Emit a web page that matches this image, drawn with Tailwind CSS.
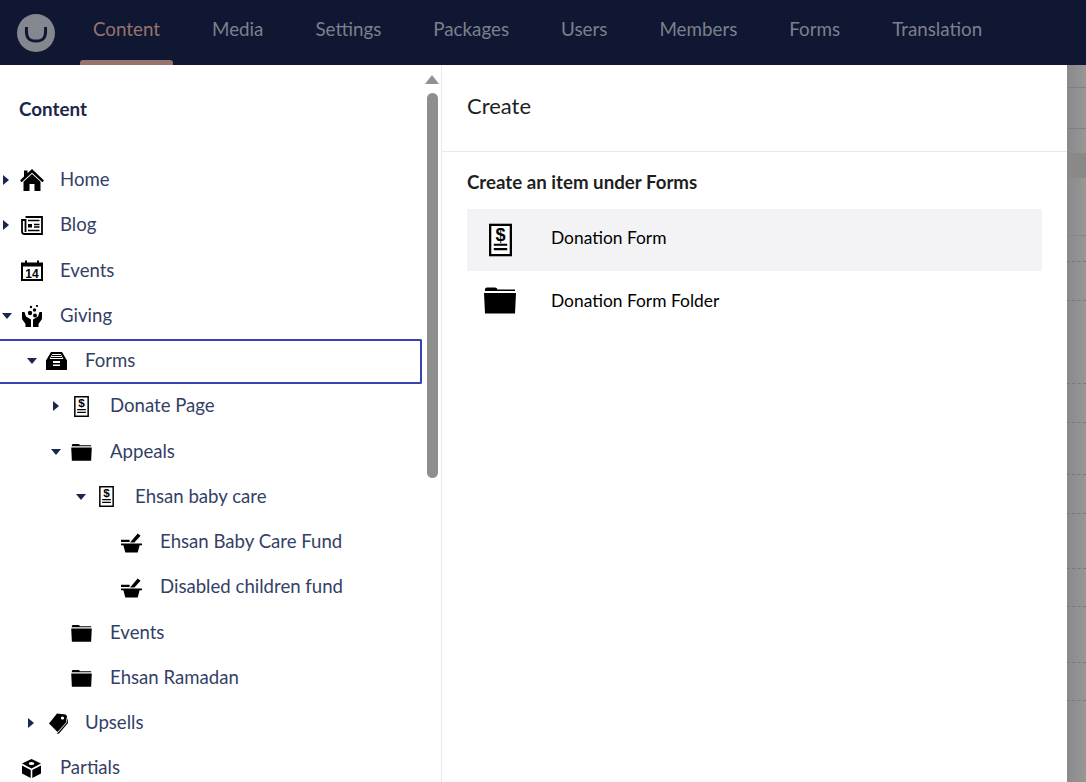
<!DOCTYPE html>
<html lang="en">

<head>
    <meta charset="UTF-8">
    <meta name="viewport" content="width=device-width, initial-scale=1.0">
    <script src="https://cdn.jsdelivr.net/npm/@tailwindcss/browser@4"></script>
    <title>Content - Create</title>
</head>

<body class="w-[1086px] h-[782px] overflow-hidden bg-white font-['Lato','Noto_Sans',sans-serif]">
    <!-- icons used more than once -->
    <svg class="hidden">
        <symbol id="folder" viewBox="0 0 32 28">
            <path d="M1 6V3.2Q1 1.5 3 1.5H11Q13 1.5 13.5 3.5H31V5H1ZM0 7H32L31 27.5H1Z" fill="#000" />
        </symbol>
        <symbol id="donation" viewBox="0 0 24 34">
            <rect x="1.2" y="1.2" width="21.6" height="31.6" fill="#fff" stroke="#000" stroke-width="2.4" />
            <text x="12" y="18" text-anchor="middle" font-size="19" font-weight="900" font-family="Liberation Sans">$</text>
            <path d="M5 22H19M5 26.5H19" stroke="#000" stroke-width="2.2" />
        </symbol>
        <symbol id="mortar" viewBox="0 0 22 22">
            <path d="M0 8H9V10.5H0ZM0 12H22V14H19.5L17.5 21.5H4.5L2.5 14H0Z" fill="#000" />
            <path d="M9.5 11L17.5 1.5L20.5 3.8L14 11Z" fill="#000" />
        </symbol>
        <symbol id="down" viewBox="0 0 10 6">
            <path d="M0 0H10L5 6Z" fill="#1b264f" />
        </symbol>
        <symbol id="right" viewBox="0 0 6 10">
            <path d="M0 0L6 5L0 10Z" fill="#1b264f" />
        </symbol>
    </svg>

    <!-- top bar -->
    <header class="h-[65px] bg-[#0f1733] flex items-center text-[18.8px] text-[#7c808c]">
        <div class="w-[38px] h-[38px] ml-[17px] rounded-full bg-[#85878e] flex items-center justify-center">
            <svg width="24" height="24" viewBox="0 0 24 24" fill="none">
                <path d="M2.5 6C2 15 3 20 12 20C21 20 22 15 21.5 6" stroke="#0f1733" stroke-width="3" />
            </svg>
        </div>
        <nav class="flex ml-[25px] h-full">
            <a class="relative w-[93px] pb-[6px] flex items-center justify-center text-[#98736e]">Content
                <span class="absolute bottom-0 left-0 right-0 h-[5px] rounded-t-[3px] bg-[#98736e]"></span>
            </a>
            <a class="flex items-center pb-[6px] ml-[39px]">Media</a>
            <a class="flex items-center pb-[6px] ml-[52px]">Settings</a>
            <a class="flex items-center pb-[6px] ml-[52px]">Packages</a>
            <a class="flex items-center pb-[6px] ml-[52px]">Users</a>
            <a class="flex items-center pb-[6px] ml-[52px]">Members</a>
            <a class="flex items-center pb-[6px] ml-[52px]">Forms</a>
            <a class="flex items-center pb-[6px] ml-[52px]">Translation</a>
        </nav>
    </header>

    <div class="flex h-[717px]">
        <!-- content tree -->
        <aside class="w-[442px] shrink-0 flex border-r border-[#e9e9eb] overflow-hidden">
            <div class="w-[423px] shrink-0">
                <h2 class="pl-[19px] pt-[33px] text-[18.8px] leading-[22px] font-bold text-[#1b264f]">Content</h2>
                <ul class="mt-[37.5px] text-[18.6px] text-[#343f66]">
                    <li class="h-[45.25px] flex items-center">
                        <svg class="ml-[3px]" width="6" height="10"><use href="#right" /></svg>
                        <svg class="ml-[11px]" width="24" height="22" viewBox="0 0 24 22">
                            <path d="M12 0L24 11.5L22.4 13.2L12 3.8L1.6 13.2L0 11.5L4 7.6V1.5H7.5V4.3ZM12 5L20.5 12.8V22H14.5V15H9.5V22H3.5V12.8Z" fill="#000" />
                        </svg>
                        <span class="ml-[16px]">Home</span>
                    </li>
                    <li class="h-[45.25px] flex items-center">
                        <svg class="ml-[3px]" width="6" height="10"><use href="#right" /></svg>
                        <svg class="ml-[12px]" width="22" height="19" viewBox="0 0 22 19" fill="none" stroke="#000">
                            <path d="M4.5 1H21V18H3.5Q1 18 1 15.5V4H4.5V16" stroke-width="1.8" />
                            <path d="M7 4.5H18.5M13 8.5H18.5M13 11H18.5M7 14.5H18.5" stroke-width="1.5" />
                            <rect x="7" y="8" width="4" height="3.5" fill="#000" stroke="none" />
                        </svg>
                        <span class="ml-[17px]">Blog</span>
                    </li>
                    <li class="h-[45.25px] flex items-center">
                        <svg class="ml-[21px]" width="22" height="21" viewBox="0 0 22 21">
                            <path d="M0 2.5H4V0.5H6V2.5H16V0.5H18V2.5H22V21H0ZM2 6.5V19H20V6.5Z" fill="#000" />
                            <text x="11" y="17.5" text-anchor="middle" font-size="12" font-weight="700" font-family="Liberation Sans">14</text>
                        </svg>
                        <span class="ml-[17px]">Events</span>
                    </li>
                    <li class="h-[45.25px] flex items-center">
                        <svg class="ml-[2px]" width="10" height="6"><use href="#down" /></svg>
                        <svg class="ml-[10px]" width="20" height="22" viewBox="0 0 20 22">
                            <path d="M0 7H2.5L4 11.5L9 14.5V22H3.5V19L0 14ZM20 7H17.5L16 11.5L11 14.5V22H16.5V19L20 14Z" fill="#000" />
                            <circle cx="8" cy="8" r="2.2" fill="#000" />
                            <circle cx="12.5" cy="5" r="1.7" fill="#000" />
                            <circle cx="13" cy="10.5" r="2" fill="#000" />
                            <circle cx="9" cy="2" r="1.2" fill="#000" />
                            <circle cx="15" cy="1" r="1.1" fill="#000" />
                        </svg>
                        <span class="ml-[18px]">Giving</span>
                    </li>
                    <!-- selected node -->
                    <li class="h-[45.25px] w-[422px] flex items-center border-2 border-l-0 border-[#3544b1] rounded-r-[2px]">
                        <svg class="ml-[27px]" width="10" height="6"><use href="#down" /></svg>
                        <svg class="ml-[9px]" width="21" height="18" viewBox="0 0 21 18">
                            <path d="M5 0H16L21 8.5V18H0V8.5ZM6.3 2L3.6 7H17.4L14.7 2ZM7 9V11H14V9ZM7 12.5V14H14V12.5Z" fill="#000" fill-rule="evenodd" />
                            <path d="M6 3.5H15M5 5.5H16" stroke="#000" stroke-width="1" />
                        </svg>
                        <span class="ml-[18px]">Forms</span>
                    </li>
                    <li class="h-[45.25px] flex items-center">
                        <svg class="ml-[53px]" width="6" height="10"><use href="#right" /></svg>
                        <svg class="ml-[15px]" width="15" height="21"><use href="#donation" /></svg>
                        <span class="ml-[21px]">Donate Page</span>
                    </li>
                    <li class="h-[45.25px] flex items-center">
                        <svg class="ml-[51px]" width="10" height="6"><use href="#down" /></svg>
                        <svg class="ml-[10px]" width="21" height="18"><use href="#folder" /></svg>
                        <span class="ml-[18px]">Appeals</span>
                    </li>
                    <li class="h-[45.25px] flex items-center">
                        <svg class="ml-[76px]" width="10" height="6"><use href="#down" /></svg>
                        <svg class="ml-[13px]" width="15" height="21"><use href="#donation" /></svg>
                        <span class="ml-[21px]">Ehsan baby care</span>
                    </li>
                    <li class="h-[45.25px] flex items-center">
                        <svg class="ml-[121px]" width="21" height="21"><use href="#mortar" /></svg>
                        <span class="ml-[18px]">Ehsan Baby Care Fund</span>
                    </li>
                    <li class="h-[45.25px] flex items-center">
                        <svg class="ml-[121px]" width="21" height="21"><use href="#mortar" /></svg>
                        <span class="ml-[18px]">Disabled children fund</span>
                    </li>
                    <li class="h-[45.25px] flex items-center">
                        <svg class="ml-[71px]" width="21" height="18"><use href="#folder" /></svg>
                        <span class="ml-[18px]">Events</span>
                    </li>
                    <li class="h-[45.25px] flex items-center">
                        <svg class="ml-[71px]" width="21" height="18"><use href="#folder" /></svg>
                        <span class="ml-[18px]">Ehsan Ramadan</span>
                    </li>
                    <li class="h-[45.25px] flex items-center">
                        <svg class="ml-[28px]" width="6" height="10"><use href="#right" /></svg>
                        <svg class="ml-[14px]" width="20" height="21" viewBox="0 0 20 21">
                            <path d="M9 0.5L17.5 1.5L19 3L18 9.5L9.5 19L1 10.5Z" fill="#000" />
                            <path d="M19.5 5L20 10L11 20.5L8.5 21L11 18.5L18.5 10Z" fill="#000" />
                            <circle cx="14.5" cy="5" r="1.6" fill="#fff" />
                        </svg>
                        <span class="ml-[17px]">Upsells</span>
                    </li>
                    <li class="h-[45.25px] flex items-center">
                        <svg class="ml-[22px]" width="19" height="19" viewBox="0 0 19 19">
                            <path d="M9.5 0L19 4.5L9.5 9.5L0 4.5Z" fill="#000" />
                            <path d="M0 6.5L8.7 11V19L0 14.5ZM19 6.5L10.3 11V19L19 14.5Z" fill="#000" />
                            <ellipse cx="9.5" cy="4.5" rx="2.8" ry="1.5" fill="#fff" />
                        </svg>
                        <span class="ml-[19px]">Partials</span>
                    </li>
                </ul>
            </div>
            <!-- scrollbar -->
            <div class="w-[19px] flex flex-col items-center pt-[10px]">
                <div class="w-0 h-0 border-x-[7px] border-x-transparent border-b-[9px] border-b-[#919191]"></div>
                <div class="w-[11px] h-[385px] mt-[9px] rounded-full bg-[#8e8e8e]"></div>
            </div>
        </aside>

        <!-- create dialog -->
        <main class="w-[625px] shrink-0 bg-white text-black">
            <div class="h-[87px] pl-[25px] pt-[27px] border-b border-[#e9e9eb] text-[22px] leading-[27px] text-[#1f1f1f]">Create</div>
            <div class="pl-[25px] pr-[25px]">
                <h3 class="mt-[19px] text-[18.7px] leading-[22px] font-bold text-[#1f1f1f]">Create an item under Forms</h3>
                <ul class="mt-[16px] text-[17.4px]">
                    <li class="h-[62px] flex items-center bg-[#f3f3f5]">
                        <svg class="ml-[22px]" width="23" height="34"><use href="#donation" /></svg>
                        <span class="ml-[39px] mb-[3px]">Donation Form</span>
                    </li>
                    <li class="h-[62px] flex items-center">
                        <svg class="ml-[17px] mb-[4px]" width="32" height="28"><use href="#folder" /></svg>
                        <span class="ml-[35px] mb-[2px]">Donation Form Folder</span>
                    </li>
                </ul>
            </div>
        </main>

        <!-- page behind the overlay, its rows just visible -->
        <div class="flex-1 flex flex-col bg-gradient-to-r from-[#8a8a8a] to-[#979797]">
            <div class="h-[23px] shrink-0 border-b border-[#808080]"></div>
            <div class="h-[41px] shrink-0 border-b border-[#808080]"></div>
            <div class="h-[24px] shrink-0"></div>
            <div class="h-[25px] shrink-0 bg-[#8b8888]"></div>
            <div class="h-[58px] shrink-0 border-b border-[#868686]"></div>
            <div class="h-[26px] shrink-0 border-b border-dashed border-[#777777]"></div>
            <div class="h-[39px] shrink-0 border-b border-dashed border-[#777777]"></div>
            <div class="h-[83px] shrink-0 border-b border-dashed border-[#777777]"></div>
            <div class="h-[39px] shrink-0 border-b border-dashed border-[#777777]"></div>
            <div class="h-[52px] shrink-0 border-b border-dashed border-[#777777]"></div>
            <div class="h-[39px] shrink-0 border-b border-dashed border-[#777777]"></div>
            <div class="h-[55px] shrink-0 border-b border-dashed border-[#777777]"></div>
            <div class="h-[38px] shrink-0 border-b border-dashed border-[#777777]"></div>
            <div class="h-[56px] shrink-0 border-b border-dashed border-[#777777]"></div>
            <div class="h-[38px] shrink-0 border-b border-dashed border-[#777777]"></div>
        </div>
    </div>
</body>

</html>
